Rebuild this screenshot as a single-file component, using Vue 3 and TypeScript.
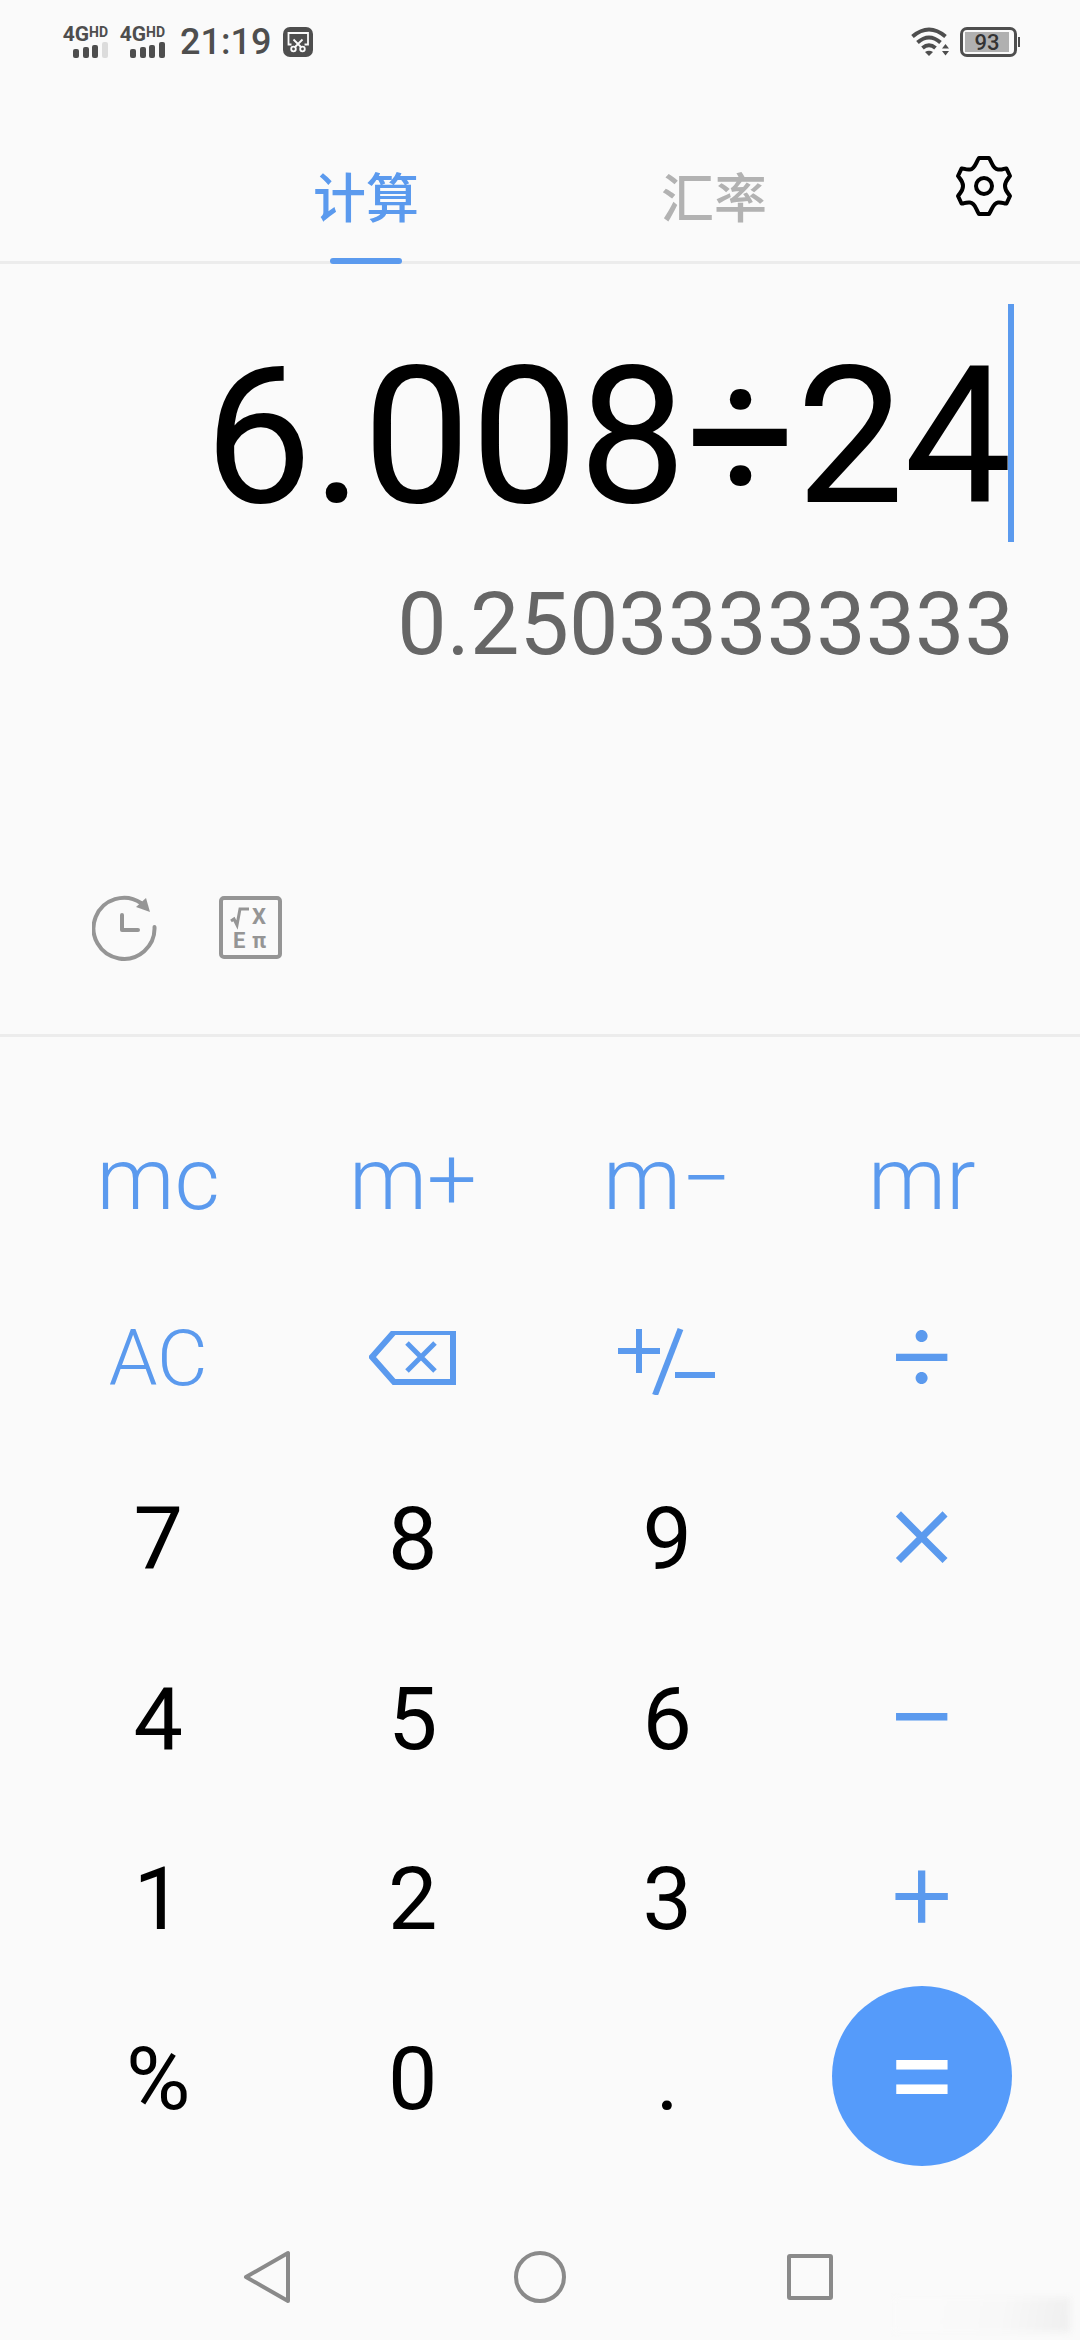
<script setup lang="ts">
import { computed, ref } from 'vue'

type Kind = 'memory' | 'edit' | 'digit' | 'operator' | 'equals'
interface Key {
  id: string
  kind: Kind
  name?: string
}

const keys: Key[] = [
  { id: 'mc', kind: 'memory' },
  { id: 'm+', kind: 'memory' },
  { id: 'm−', kind: 'memory' },
  { id: 'mr', kind: 'memory' },
  { id: 'AC', kind: 'edit' },
  { id: 'back', kind: 'edit', name: '删除' },
  { id: 'sign', kind: 'edit', name: '正负' },
  { id: '÷', kind: 'operator' },
  { id: '7', kind: 'digit' },
  { id: '8', kind: 'digit' },
  { id: '9', kind: 'digit' },
  { id: '×', kind: 'operator' },
  { id: '4', kind: 'digit' },
  { id: '5', kind: 'digit' },
  { id: '6', kind: 'digit' },
  { id: '−', kind: 'operator' },
  { id: '1', kind: 'digit' },
  { id: '2', kind: 'digit' },
  { id: '3', kind: 'digit' },
  { id: '+', kind: 'operator' },
  { id: '%', kind: 'digit' },
  { id: '0', kind: 'digit' },
  { id: '.', kind: 'digit' },
  { id: '=', kind: 'equals' },
]

const signals = [{ level: 3 }, { level: 4 }]
const activeTab = ref('计算')
const tabs = ['计算', '汇率']
const expression = ref('6.008÷24')

function evaluate(source: string): number {
  const tokens = source.match(/[\d.]+%?|[÷×−+]/g) ?? []
  let total = 0
  let term = 0
  let op = '+'
  for (const token of tokens) {
    if (/^[÷×−+]$/.test(token)) {
      op = token
      continue
    }
    const value = token.endsWith('%') ? parseFloat(token) / 100 : parseFloat(token)
    if (op === '×') term *= value
    else if (op === '÷') term /= value
    else {
      total += term
      term = op === '−' ? -value : value
    }
  }
  return total + term
}

const result = computed(() => String(evaluate(expression.value)).slice(0, 13))

function press(key: Key) {
  if (key.id === 'AC') expression.value = ''
  else if (key.id === 'back') expression.value = expression.value.slice(0, -1)
  else if (key.kind === 'equals') expression.value = result.value
  else if (key.kind === 'digit' || key.kind === 'operator') expression.value += key.id
}
</script>

<template>
  <div class="screen">
    <div class="status">
      <div class="status-side">
        <div v-for="(signal, i) in signals" :key="i" class="signal">
          <div class="network"><span class="gen">4G</span><span class="hd">HD</span></div>
          <svg class="bars" width="35" height="16" viewBox="0 0 35 16">
            <rect x="0" y="7" width="6" height="9" rx="2" />
            <rect x="10" y="5" width="6" height="11" rx="2" />
            <rect x="19" y="3" width="6" height="13" rx="2" />
            <rect x="29" y="0" width="6" height="16" rx="2" :class="{ off: signal.level < 4 }" />
          </svg>
        </div>
        <span class="time">21:19</span>
        <svg class="clip" width="30" height="30" viewBox="0 0 30 30">
          <rect width="30" height="30" rx="7" fill="#4e4e4e" />
          <g fill="none" stroke="#fafafa" stroke-width="1.8">
            <path d="M8.5 17.500H5.500V6H25V17.500H21.500" />
            <path d="M10.500 12.500L18.500 20.500M19.500 12.500L11.500 20.500" />
            <circle cx="10.500" cy="22" r="2.300" />
            <circle cx="19.500" cy="22" r="2.300" />
          </g>
        </svg>
      </div>
      <div class="status-side">
        <svg width="38" height="30" viewBox="0 0 38 30">
          <g fill="none" stroke="#4e4e4e" stroke-width="4">
            <path d="M1.500 9.500Q18 -4.500 34.500 9.500" />
            <path d="M6.500 15.500Q18 5.500 29.500 15.500" />
            <path d="M11.500 21Q18 15.500 24.500 21" />
          </g>
          <path d="M14 25Q18 22.500 22 25L18 29Z" fill="#4e4e4e" />
          <path d="M31 21.500L34.500 17L38 21.500ZM31 24L34.500 28.500L38 24Z" fill="#4e4e4e" />
        </svg>
        <div class="battery"><span class="charge">93</span></div>
      </div>
    </div>

    <header class="header">
      <nav class="tabs">
        <button
          v-for="tab in tabs"
          :key="tab"
          class="tab"
          :class="{ active: tab === activeTab }"
          @click="activeTab = tab"
        >
          {{ tab }}
        </button>
      </nav>
      <button class="gear" aria-label="设置">
        <svg width="64" height="64" viewBox="-32 -32 64 64" fill="none" stroke="#000" stroke-width="4" stroke-linejoin="round">
          <path d="M-5-28H5C8-24 8.500-17 14-16.500S20-18 22.500-17.500L26-10C24-7 21-5 21 0S24 7 26 10L22.500 17.500C20 18 19 16 14 16.500S8 24 5 28H-5C-8 24-8.500 17-14 16.500S-20 18-22.500 17.500L-26 10C-24 7-21 5-21 0S-24-7-26-10L-22.500-17.500C-20-18-19-16-14-16.500S-8-24-5-28Z" />
          <circle r="8" />
        </svg>
      </button>
    </header>

    <main class="display">
      <div class="entry">
        <input v-model="expression" class="expression" type="text" aria-label="算式" />
        <span class="caret"></span>
      </div>
      <output class="result">{{ result }}</output>
      <div class="tools">
        <button class="tool" aria-label="历史记录">
          <svg width="66" height="66" viewBox="0 0 66 66" fill="none" stroke="#959595" stroke-width="4">
            <path d="M62.500 32A30.500 30.500 0 1 1 49 8" stroke-linecap="round" />
            <path d="M30 20V35H46" stroke-linecap="round" stroke-linejoin="round" />
            <path d="M54 3L58 17L44 12Z" fill="#959595" stroke="none" />
          </svg>
        </button>
        <button class="tool" aria-label="科学计算">
          <svg width="66" height="66" viewBox="0 0 66 66" fill="none" stroke="#959595" stroke-width="4">
            <rect x="3" y="3" width="59" height="59" rx="3" />
            <path d="M13 26L16 24L19 30L22 14H31" stroke-width="3" />
            <text x="34" y="29">X</text>
            <text x="15" y="53">E</text>
            <text x="34" y="53">π</text>
          </svg>
        </button>
      </div>
    </main>

    <section class="keypad">
      <div v-for="key in keys" :key="key.id" class="cell">
        <button class="key" :class="[key.kind, { clear: key.id === 'AC' }]" :aria-label="key.name" @click="press(key)">
          <svg v-if="key.id === 'back'" width="88" height="56" viewBox="0 0 88 56" fill="none" stroke="currentColor" stroke-width="6">
            <path d="M3 26L25 1H84V51H25Z" />
            <path d="M38 12L66 40M66 12L38 40" stroke-width="5" />
          </svg>
          <svg v-else-if="key.id === 'sign'" width="98" height="72" viewBox="0 0 98 72" fill="none" stroke="currentColor" stroke-width="6">
            <path d="M0 28H42M21 6V50M57 52H97" />
            <path d="M62.500 6L37 72" />
          </svg>
          <template v-else>{{ key.id }}</template>
        </button>
      </div>
    </section>

    <nav class="system">
      <button class="system-key" aria-label="返回">
        <svg width="56" height="56" viewBox="0 0 56 56">
          <path d="M46 4V52L4 28Z" />
        </svg>
      </button>
      <button class="system-key" aria-label="主屏幕">
        <svg width="56" height="56" viewBox="0 0 56 56"><circle cx="28" cy="28" r="24" /></svg>
      </button>
      <button class="system-key" aria-label="最近任务">
        <svg width="56" height="56" viewBox="0 0 56 56"><rect x="7" y="7" width="42" height="42" rx="1" /></svg>
      </button>
      <span class="smudge"></span>
    </nav>
  </div>
</template>

<style>
body {
  background: #fafafa;
}
</style>

<style scoped>
.screen {
  display: flex;
  flex-direction: column;
  min-height: 100vh;
  background: #fafafa;
  font-family: Roboto, "Noto Sans CJK SC", sans-serif;
  color: #000;
}
button {
  display: flex;
  align-items: center;
  justify-content: center;
  margin: 0;
  padding: 0;
  border: 0;
  background: none;
  font: inherit;
  color: inherit;
}
svg {
  display: block;
}

.status {
  display: flex;
  justify-content: space-between;
  height: 84px;
  padding: 0 60px 0 62px;
  color: #4e4e4e;
}
.status-side {
  display: flex;
  align-items: center;
  gap: 11px;
}
.signal {
  display: flex;
  flex-direction: column;
  align-items: flex-end;
  width: 46px;
}
.network {
  display: flex;
  align-items: flex-start;
  font-weight: 700;
}
.gen {
  font-size: 21px;
  line-height: 16px;
}
.hd {
  font-size: 14px;
  line-height: 12px;
}
.bars {
  fill: #4e4e4e;
}
.bars .off {
  fill: #dcdcdc;
}
.time {
  padding: 0 1px 0 4px;
  font-size: 36px;
  font-weight: 500;
  line-height: 42px;
}
.battery {
  position: relative;
  box-sizing: border-box;
  display: flex;
  width: 57px;
  height: 30px;
  margin-right: 3px;
  padding: 2px 5px 2px 2px;
  border: 3px solid #4e4e4e;
  border-radius: 7px;
}
.battery::after {
  content: "";
  position: absolute;
  top: 7px;
  right: -6px;
  width: 2px;
  height: 10px;
  background: #4e4e4e;
}
.charge {
  flex: 1;
  background: #b0b0b0;
  color: #333;
  font-size: 22px;
  font-weight: 500;
  line-height: 21px;
  text-align: center;
}

.header {
  display: grid;
  grid-template-columns: 192px 1fr 192px;
  height: 177px;
  border-bottom: 3px solid #ececec;
}
.tabs {
  grid-column: 2;
  display: grid;
  grid-template-columns: 1fr 1fr;
}
.tab {
  position: relative;
  padding-top: 54px;
  color: #b2b2b2;
  font-size: 53px;
  font-weight: 500;
  line-height: 76px;
}
.tab.active {
  color: #5b9aee;
}
.tab.active::after {
  content: "";
  position: absolute;
  left: 50%;
  bottom: -3px;
  width: 72px;
  height: 6px;
  margin-left: -36px;
  border-radius: 3px;
  background: #5b9aee;
}
.gear {
  padding-top: 27px;
}

.display {
  display: flex;
  flex-direction: column;
  padding: 40px 66px 73px 92px;
  border-bottom: 3px solid #ececec;
}
.entry {
  display: flex;
  height: 238px;
}
.expression {
  flex: 1;
  min-width: 0;
  box-sizing: border-box;
  margin-right: -4px;
  padding: 26px 0 0;
  border: 0;
  outline: 0;
  background: none;
  color: #000;
  font: 400 192px Roboto, sans-serif;
  text-align: right;
}
.caret {
  width: 6px;
  background: #5b9aee;
}
.result {
  margin-top: 30px;
  color: #666;
  font-size: 88px;
  line-height: 104px;
  text-align: right;
}
.tools {
  display: flex;
  gap: 60px;
  margin-top: 219px;
}
.tool text {
  fill: #959595;
  stroke: none;
  font: 700 22px Roboto, sans-serif;
}

.keypad {
  display: grid;
  grid-template-columns: repeat(4, 1fr);
  grid-auto-rows: 180px;
  padding: 49px 31px 0;
}
.cell {
  display: grid;
  place-items: center;
}
.key {
  box-sizing: border-box;
  width: 180px;
  height: 180px;
  border-radius: 50%;
  font-size: 88px;
  line-height: 104px;
}
.memory,
.edit,
.digit {
  padding-top: 6px;
}
.memory,
.edit {
  color: #5b9aee;
  font-weight: 300;
}
.clear {
  font-size: 78px;
}
.operator,
.equals {
  padding-bottom: 16px;
  font-family: Inter, sans-serif;
  font-size: 116px;
}
.operator {
  color: #5b9aee;
  font-weight: 300;
}
.equals {
  background: #559bfa;
  color: #fff;
  font-weight: 400;
}

.system {
  position: relative;
  flex: 1;
  display: grid;
  grid-template-columns: repeat(3, 1fr);
  align-items: center;
  min-height: 126px;
  padding: 47px 135px 0;
}
.system svg {
  fill: none;
  stroke: #8a8a8a;
  stroke-width: 4;
  stroke-linejoin: round;
}
.smudge {
  position: absolute;
  right: 10px;
  bottom: 8px;
  width: 176px;
  height: 34px;
  background: linear-gradient(100deg, #fafafa 20%, #f8f8f8 60%, #efefef);
  filter: blur(3px);
}
</style>
